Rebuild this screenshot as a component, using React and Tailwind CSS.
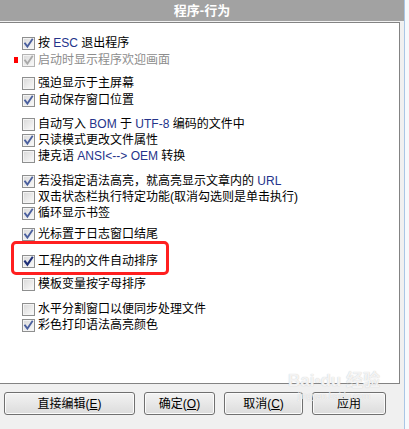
function Check({ checked, disabled, strong }) {
  const stroke = disabled ? "#a9a9a9" : strong ? "#1e2f78" : "#4a5f9e";
  return (
    <span
      className={`flex h-[13px] w-[13px] shrink-0 items-center justify-center border bg-gradient-to-br from-[#d8d8d8] to-[#fbfbfb] shadow-[inset_0_0_0_1px_#f4f4f4] ${
        disabled ? "border-[#b4b4b4]" : "border-[#8e8f8f]"
      }`}
    >
      {checked ? (
        <svg viewBox="0 0 11 11" className="h-[11px] w-[11px]" aria-hidden="true">
          <path d="M2 5.4L4.4 8.6L9.2 1.6" fill="none" stroke={stroke} strokeWidth={strong ? "2.1" : "1.8"} strokeLinecap="square" />
        </svg>
      ) : null}
    </span>
  );
}

function L({ children }) {
  return <span className="text-[#24338a]">{children}</span>;
}

const rows = [
  { label: <>按 <L>ESC</L> 退出程序</>, checked: true, mt: "mt-0" },
  { label: "启动时显示程序欢迎画面", checked: true, disabled: true, mark: true, mt: "mt-[1px]" },
  { label: "强迫显示于主屏幕", checked: false, mt: "mt-[7px]" },
  { label: "自动保存窗口位置", checked: true, mt: "mt-[1px]" },
  { label: <>自动写入 <L>BOM</L> 于 <L>UTF-8</L> 编码的文件中</>, checked: false, mt: "mt-[8px]" },
  { label: "只读模式更改文件属性", checked: true, mt: "mt-0" },
  { label: <>捷克语 <L>ANSI&lt;--&gt; OEM</L> 转换</>, checked: false, mt: "mt-0" },
  { label: <>若没指定语法高亮，就高亮显示文章内的 <L>URL</L></>, checked: true, mt: "mt-[9px]" },
  { label: "双击状态栏执行特定功能(取消勾选则是单击执行)", checked: false, mt: "mt-0" },
  { label: "循环显示书签", checked: true, mt: "mt-0" },
  { label: "光标置于日志窗口结尾", checked: true, mt: "mt-[5px]" },
  { label: "工程内的文件自动排序", checked: true, strong: true, mt: "mt-[11px]" },
  { label: "模板变量按字母排序", checked: false, mt: "mt-[7px]" },
  { label: "水平分割窗口以便同步处理文件", checked: false, mt: "mt-[9px]" },
  { label: "彩色打印语法高亮颜色", checked: true, mt: "mt-0" },
];

function Btn({ width, children }) {
  return (
    <button
      type="button"
      className={`flex h-[23px] ${width} shrink-0 items-center justify-center rounded-[3px] border border-[#707070] bg-gradient-to-b from-[#f3f3f3] to-[#dcdcdc] text-[12px] leading-none text-black shadow-[inset_0_0_0_1px_#fbfbfb]`}
    >
      {children}
    </button>
  );
}

export default function App() {
  return (
    <div
      className="relative flex h-[429px] w-[409px] overflow-hidden bg-[#f0f0f0] text-[12px] text-black"
      style={{ fontFamily: '"Liberation Sans", "Noto Sans CJK SC", sans-serif' }}
    >
      <div className="flex w-[404px] flex-col">
        <div className="flex h-[21px] items-center justify-center bg-[#a2a2a2] text-[13px] font-bold text-white">
          程序-行为
        </div>
        <div className="h-[1px] bg-[#f2f2f2]" />
        <div className="mr-[4px] flex h-[362px] flex-col border-y border-r border-[#838383] bg-white pl-[22px] pt-[12px]">
          {rows.map((r, i) => (
            <div key={i} className={`relative flex h-[16px] items-center gap-[3px] ${r.mt}`}>
              {r.mark ? <span className="absolute left-[-8px] top-[5px] h-[6px] w-[4px] bg-[#ff0000]" /> : null}
              <Check checked={r.checked} disabled={r.disabled} strong={r.strong} />
              <span className={`whitespace-nowrap leading-none ${r.disabled ? "text-[#8d8d8d]" : ""}`}>{r.label}</span>
            </div>
          ))}
        </div>
        <div className="flex gap-[9px] pl-[4px] pt-[8px]">
          <Btn width="w-[131px]">
            直接编辑(<span className="underline">E</span>)
          </Btn>
          <Btn width="w-[71px]">
            确定(<span className="underline">O</span>)
          </Btn>
          <Btn width="w-[79px]">
            取消(<span className="underline">C</span>)
          </Btn>
          <Btn width="w-[74px]">应用</Btn>
        </div>
      </div>
      <div className="w-[1px] bg-[#a9c6e6]" />
      <div className="flex-1 bg-[#f7f9fc]" />

      <div className="pointer-events-none absolute left-[11px] top-[241px] h-[34px] w-[158px] rounded-[5px] border-[3px] border-[#ff1f1f]" />

      <div className="pointer-events-none absolute left-[288px] top-[372px] flex flex-col items-center leading-none text-white/80 [text-shadow:0_0_1px_#bdbdbd]">
        <div className="text-[17px] font-bold">Bai&#x2022;du 经验</div>
        <div className="mt-[3px] text-[9px]">jingyan.baidu.com</div>
      </div>
    </div>
  );
}
